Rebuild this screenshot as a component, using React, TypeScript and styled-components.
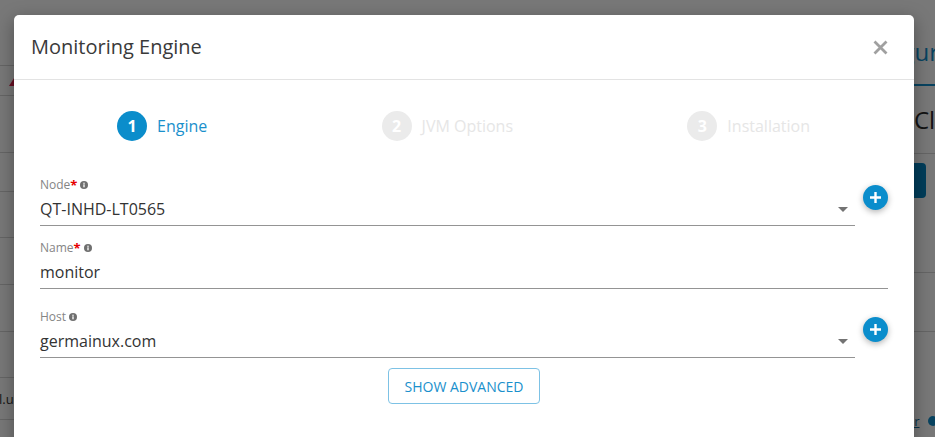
import * as React from 'react'
import styled, { createGlobalStyle } from 'styled-components'

// ___________________________________________________________________

const GlobalStyle = createGlobalStyle`
  html, body {
    margin: 0;
    padding: 0;
    overflow: hidden;
  }
  body {
    font-family: "Open Sans", "Liberation Sans", sans-serif;
    background: #ffffff;
  }
`

type Step = { n: number; label: string; active?: boolean }

const steps: Step[] = [
  { n: 1, label: 'Engine', active: true },
  { n: 2, label: 'JVM Options' },
  { n: 3, label: 'Installation' },
]

const leftRows = [30, 57, 39, 46, 47, 47, 46, 42, 30]

// ___________________________________________________________________

const InfoIcon = () => (
  <InfoSvg viewBox="0 0 8 8">
    <circle cx="4" cy="4" r="4" fill="#6f6f6f" />
    <rect x="3.35" y="3.3" width="1.3" height="3" fill="#fff" />
    <circle cx="4" cy="2.2" r="0.75" fill="#fff" />
  </InfoSvg>
)

const Caret = () => (
  <CaretSvg viewBox="0 0 10 5">
    <polygon points="0 0 10 0 5 5" fill="#737373" />
  </CaretSvg>
)

const PlusButton = () => (
  <Fab type="button" aria-label="add">
    <svg width="13" height="13" viewBox="0 0 13 13">
      <path d="M6.5 1v11M1 6.5h11" stroke="#fff" strokeWidth="2.4" />
    </svg>
  </Fab>
)

type FieldProps = {
  label: string
  value: string
  required?: boolean
  select?: boolean
  mt: number
  addable?: boolean
}

const Field: React.FC<FieldProps> = ({ label, value, required, select, mt, addable }) => (
  <FieldRow $mt={mt}>
    <FieldBox>
      <Label>
        {label}
        {required && <Required>*</Required>}
        <InfoIcon />
      </Label>
      <Control>
        <Value>{value}</Value>
        {select && <Caret />}
      </Control>
    </FieldBox>
    {addable && <PlusButton />}
  </FieldRow>
)

const App: React.FC = () => {
  return (
    <Screen>
      <GlobalStyle />
      <BackPage>
        <LeftPane>
          <LeftTop />
          {leftRows.map((h, i) => (
            <LeftRow key={i} $h={h}>
              {i === 0 && (
                <svg width="14" height="11" viewBox="0 0 14 11" style={{ marginLeft: 9 }}>
                  <polygon points="7 0 14 11 0 11" fill="#e0204c" />
                </svg>
              )}
              {i === 7 && <CellText>l.user</CellText>}
            </LeftRow>
          ))}
        </LeftPane>
        <RightPane>
          <TabBar>
            <Tab>Configuration</Tab>
          </TabBar>
          <SideHeading>Cloud</SideHeading>
          <SideButton />
          <SideRow $h={74} />
          <SideRow $h={58} />
          <SideFooter>
            <SideLink>Filter</SideLink>
            <Dot />
          </SideFooter>
        </RightPane>
      </BackPage>

      <Overlay />

      <Modal>
        <ModalHeader>
          <Title>Monitoring Engine</Title>
          <CloseButton type="button" aria-label="close">
            <svg width="15" height="15" viewBox="0 0 15 15">
              <path d="M1.5 1.5l12 12M13.5 1.5l-12 12" stroke="#a0a0a0" strokeWidth="2.8" />
            </svg>
          </CloseButton>
        </ModalHeader>
        <ModalBody>
          <Stepper>
            {steps.map((s) => (
              <StepItem key={s.n}>
                <StepCircle $active={s.active}>{s.n}</StepCircle>
                <StepLabel $active={s.active}>{s.label}</StepLabel>
              </StepItem>
            ))}
          </Stepper>

          <Field label="Node" value="QT-INHD-LT0565" required select addable mt={36} />
          <Field label="Name" value="monitor" required mt={14} />
          <Field label="Host" value="germainux.com" select addable mt={20} />

          <AdvancedButton type="button">SHOW ADVANCED</AdvancedButton>
        </ModalBody>
      </Modal>
    </Screen>
  )
}

export default App

// ___________________________________________________________________

const Screen = styled.div`
  position: relative;
  width: 935px;
  height: 437px;
  overflow: hidden;
`

const BackPage = styled.div`
  display: flex;
  height: 100%;
  background: #ffffff;
`

const LeftPane = styled.div`
  flex: 1;
  display: flex;
  flex-direction: column;
  overflow: hidden;
`

const LeftTop = styled.div`
  height: 66px;
  flex-shrink: 0;
  border-bottom: 1px solid #d6d6d6;
  box-sizing: border-box;
`

const LeftRow = styled.div<{ $h: number }>`
  height: ${(p) => p.$h}px;
  flex-shrink: 0;
  display: flex;
  align-items: center;
  border-bottom: 1px solid #d6d6d6;
  box-sizing: border-box;
`

const CellText = styled.span`
  font-size: 13px;
  color: #333;
  margin-left: -1px;
`

const RightPane = styled.div`
  width: 99px;
  display: flex;
  flex-direction: column;
  overflow: hidden;
`

const TabBar = styled.div`
  height: 86px;
  flex-shrink: 0;
  display: flex;
  align-items: flex-end;
  box-sizing: border-box;
`

const Tab = styled.div`
  font-size: 24px;
  line-height: 34px;
  padding-bottom: 15px;
  padding-left: 7px;
  color: #138fcc;
  white-space: nowrap;
  border-bottom: 2px solid #138fcc;
`

const SideHeading = styled.div`
  height: 68px;
  flex-shrink: 0;
  box-sizing: border-box;
  padding-left: 78px;
  font-size: 24px;
  line-height: 68px;
  color: #2a2a2a;
  white-space: nowrap;
  border-bottom: 1px solid #d6d6d6;
`

const SideButton = styled.div`
  margin-top: 9px;
  width: 90px;
  height: 35px;
  flex-shrink: 0;
  border-radius: 4px;
  background: #0182c0;
`

const SideRow = styled.div<{ $h: number }>`
  height: ${(p) => p.$h}px;
  flex-shrink: 0;
  border-bottom: 1px solid #d6d6d6;
`

const SideFooter = styled.div`
  display: flex;
  align-items: center;
  gap: 8px;
  margin-top: 80px;
  margin-left: 53px;
`

const SideLink = styled.span`
  font-size: 13px;
  color: #0c6a99;
  text-decoration: underline;
  white-space: nowrap;
`

const Dot = styled.span`
  width: 10px;
  height: 10px;
  border-radius: 50%;
  background: #138fcc;
  flex-shrink: 0;
`

const Overlay = styled.div`
  position: absolute;
  inset: 0;
  background: rgba(0, 0, 0, 0.53);
`

const Modal = styled.div`
  position: absolute;
  left: 14px;
  top: 15px;
  width: 900px;
  height: 440px;
  background: #ffffff;
  border-radius: 5px;
  box-shadow: 0 5px 18px rgba(0, 0, 0, 0.35);
`

const ModalHeader = styled.div`
  height: 65px;
  box-sizing: border-box;
  display: flex;
  align-items: center;
  justify-content: space-between;
  padding: 0 26px 0 17px;
  border-bottom: 1px solid #e3e3e3;
`

const Title = styled.h2`
  margin: 0;
  font-size: 20px;
  font-weight: 400;
  line-height: 30px;
  color: #3a3a3a;
`

const CloseButton = styled.button`
  display: flex;
  padding: 0;
  border: 0;
  background: none;
  cursor: pointer;
`

const ModalBody = styled.div`
  display: flex;
  flex-direction: column;
  padding: 0 26px;
`

const Stepper = styled.div`
  display: flex;
  justify-content: space-between;
  padding: 31px 78px 0 77px;
`

const StepItem = styled.div`
  display: flex;
  align-items: center;
  gap: 10px;
`

const StepCircle = styled.div<{ $active?: boolean }>`
  width: 30px;
  height: 30px;
  border-radius: 50%;
  display: flex;
  align-items: center;
  justify-content: center;
  background: ${(p) => (p.$active ? '#0b8dcb' : '#ebebeb')};
  color: #ffffff;
  font-size: 16px;
  font-weight: 700;
`

const StepLabel = styled.span<{ $active?: boolean }>`
  font-size: 16px;
  color: ${(p) => (p.$active ? '#1a90cc' : '#e6e6e6')};
`

const FieldRow = styled.div<{ $mt: number }>`
  display: flex;
  align-items: center;
  gap: 8px;
  margin-top: ${(p) => p.$mt}px;
`

const FieldBox = styled.div`
  flex: 1;
  display: flex;
  flex-direction: column;
`

const Label = styled.div`
  display: flex;
  align-items: center;
  font-size: 12px;
  line-height: 16px;
  color: #858585;
  margin-bottom: 6px;
`

const Required = styled.span`
  color: #e60000;
  font-weight: 700;
  font-size: 13px;
  line-height: 16px;
  align-self: flex-start;
`

const InfoSvg = styled.svg`
  width: 8px;
  height: 8px;
  margin-left: 3px;
`

const Control = styled.div`
  display: flex;
  align-items: center;
  padding-bottom: 6px;
  border-bottom: 1px solid #949494;
`

const Value = styled.span`
  flex: 1;
  font-size: 16px;
  line-height: 20px;
  color: #333333;
`

const CaretSvg = styled.svg`
  width: 10px;
  height: 5px;
  margin-right: 7px;
`

const Fab = styled.button`
  width: 25px;
  height: 25px;
  flex-shrink: 0;
  margin-bottom: 9px;
  padding: 0;
  border: 0;
  border-radius: 50%;
  background: #0a8dcc;
  display: flex;
  align-items: center;
  justify-content: center;
  box-shadow: 0 2px 6px rgba(0, 0, 0, 0.3);
  cursor: pointer;
`

const AdvancedButton = styled.button`
  align-self: center;
  margin-top: 10px;
  height: 36px;
  padding: 0 16px;
  border: 1px solid #7dc2e5;
  border-radius: 4px;
  background: #ffffff;
  color: #1a90cc;
  font-family: "Open Sans", "Liberation Sans", sans-serif;
  font-size: 14px;
  cursor: pointer;
`
